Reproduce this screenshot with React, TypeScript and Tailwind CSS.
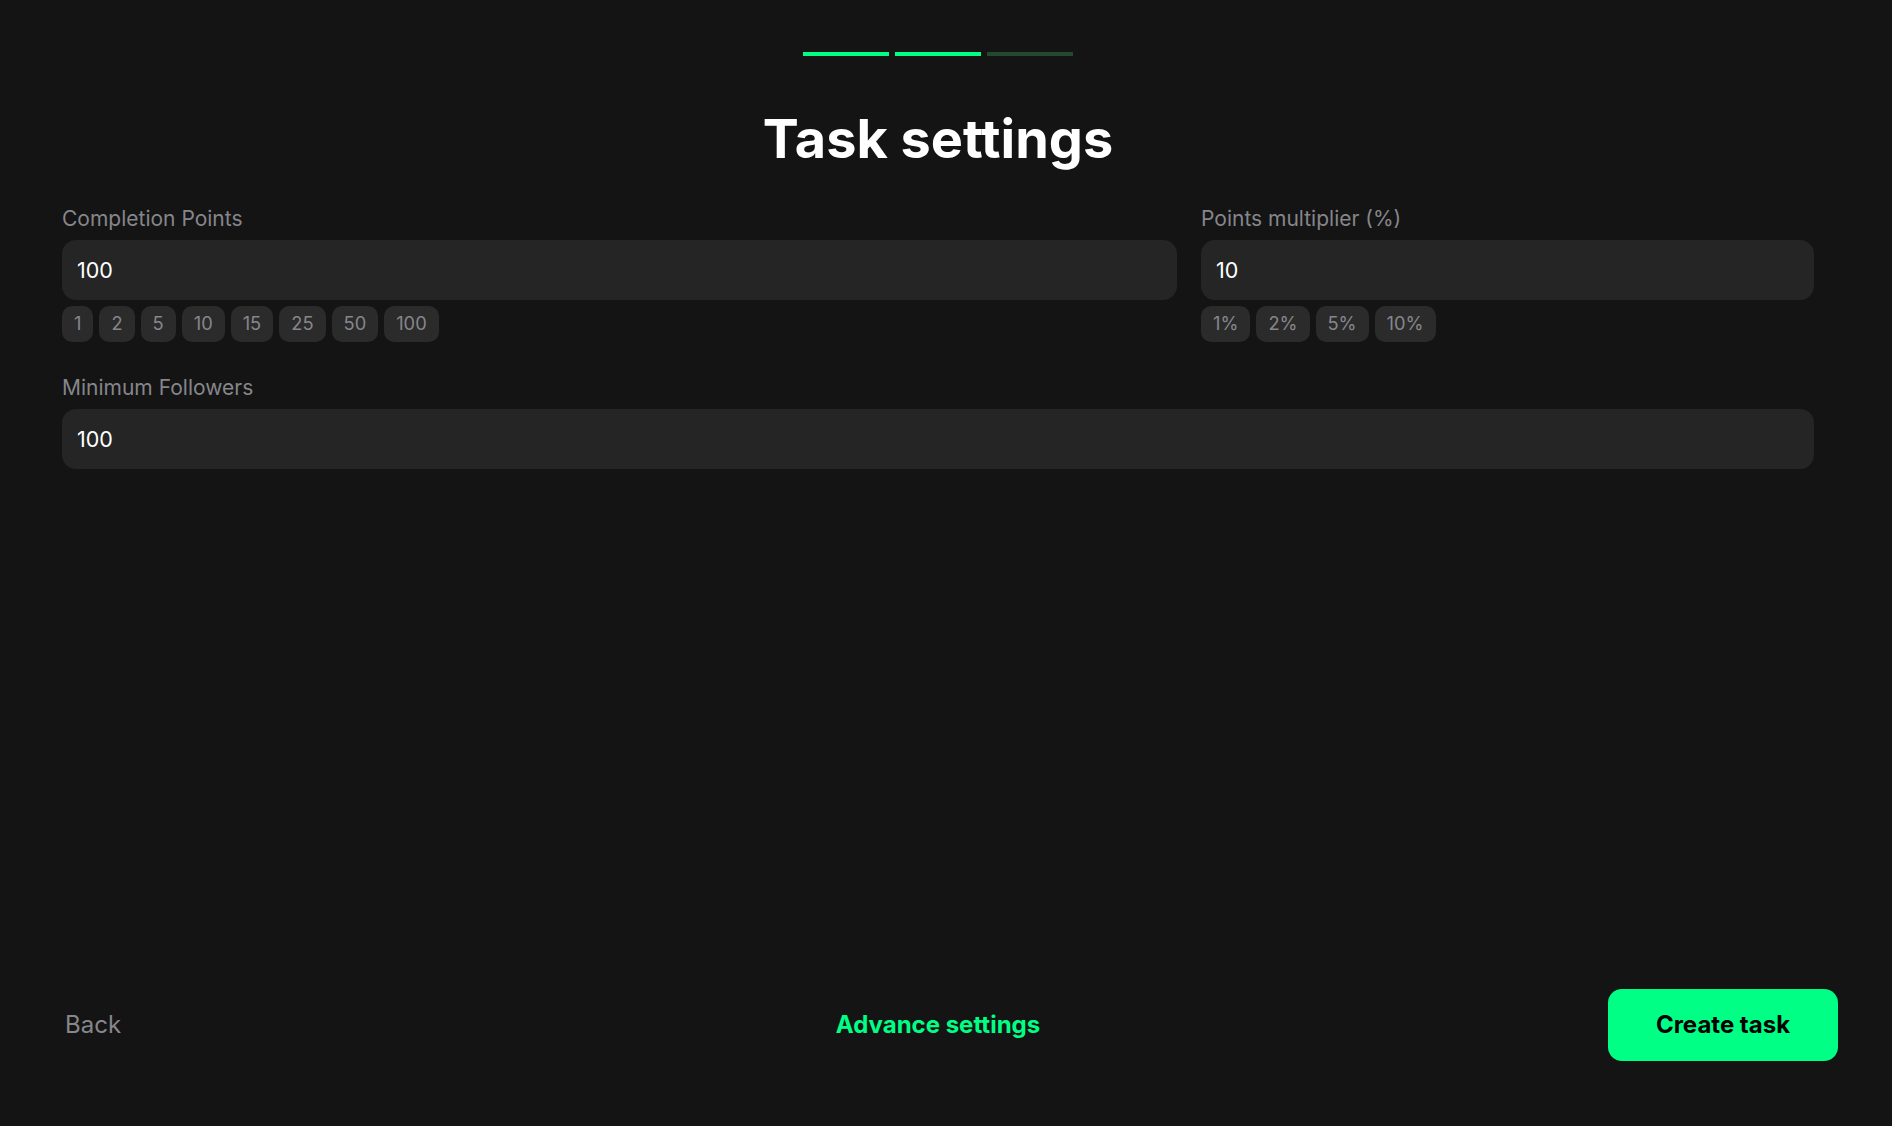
import React from 'react';

const pointChips = ['1', '2', '5', '10', '15', '25', '50', '100'];
const multiplierChips = ['1%', '2%', '5%', '10%'];

const Chips = ({ items }: { items: string[] }) => (
  <div className="mt-[6px] flex gap-[6px]">
    {items.map((item) => (
      <button
        key={item}
        className="flex h-[36px] items-center rounded-[10px] bg-[#2b2b2b] px-[12px] text-[18.3px] text-[#86868b]"
      >
        {item}
      </button>
    ))}
  </div>
);

const Field = ({ label, value }: { label: string; value: string }) => (
  <>
    <label className="block h-[33px] text-[21px] leading-[24px] text-[#86868b]">{label}</label>
    <input
      defaultValue={value}
      className="block h-[60px] w-full rounded-[14px] bg-[#252525] px-[15px] text-[21.5px] text-white outline-none"
    />
  </>
);

export default function App() {
  return (
    <div className="flex h-screen w-full flex-col bg-[#141414] pr-[16px] font-['Inter',sans-serif]">
      <div className="mt-[52px] flex justify-center gap-[6px]">
        <div className="h-[4px] w-[86px] bg-[#00ff85]" />
        <div className="h-[4px] w-[86px] bg-[#00ff85]" />
        <div className="h-[4px] w-[86px] bg-[#234a2f]" />
      </div>

      <h1 className="mt-[50px] text-center text-[54px] leading-[66px] font-bold text-white">Task settings</h1>

      <div className="mt-[35px] px-[62px]">
        <div className="flex gap-[24px]">
          <div className="flex-1">
            <Field label="Completion Points" value="100" />
            <Chips items={pointChips} />
          </div>
          <div className="w-[613px]">
            <Field label="Points multiplier (%)" value="10" />
            <Chips items={multiplierChips} />
          </div>
        </div>
        <div className="mt-[34px]">
          <Field label="Minimum Followers" value="100" />
        </div>
      </div>

      <div className="mt-auto mb-[65px] flex items-center justify-between px-[38px]">
        <button className="w-[230px] pl-[27px] text-left text-[24px] text-[#86868b]">Back</button>
        <button className="text-[24px] font-bold text-[#00ff85]">Advance settings</button>
        <button className="h-[72px] w-[230px] rounded-[14px] bg-[#00ff85] text-[24px] font-bold text-black">
          Create task
        </button>
      </div>
    </div>
  );
}
